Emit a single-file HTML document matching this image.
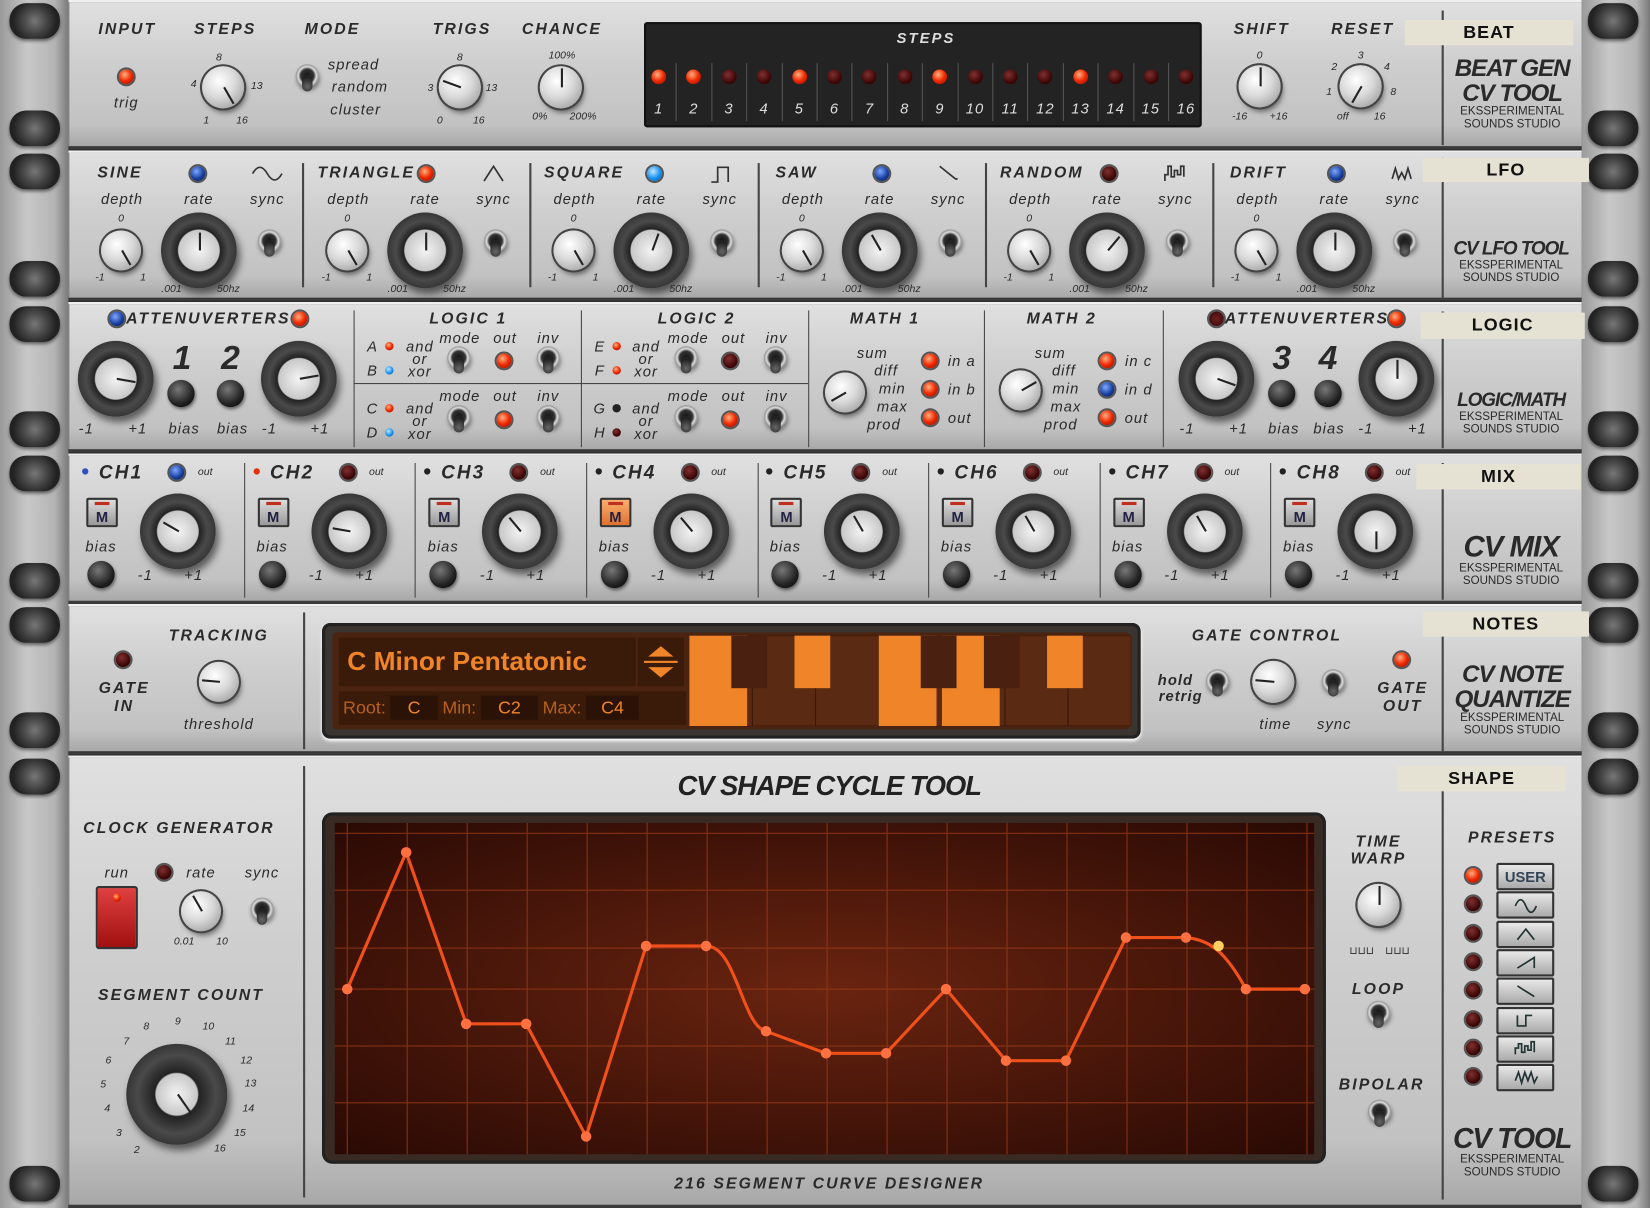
<!DOCTYPE html>
<html><head><meta charset="utf-8">
<style>
*{margin:0;padding:0;box-sizing:border-box}
html,body{width:1650px;height:1208px;overflow:hidden;background:#2a2a2a}
#w{position:absolute;left:0;top:0;width:1568px;height:1148px;transform:scale(1.05230,1.05226);transform-origin:0 0;font-family:"Liberation Sans",sans-serif}
.a{position:absolute}
.rail{position:absolute;top:0;height:1148px;width:65px;background:linear-gradient(90deg,#9a9a9a,#c8c8c8 40%,#b4b4b4 80%,#7a7a7a)}
.p{position:absolute;left:65px;width:1438px;background:linear-gradient(180deg,#e0e0e0,#cfcfcf 40%,#c2c2c2 85%,#a8a8a8);border-top:2px solid #f0f0f0;border-bottom:3px solid #3a3a3a;box-shadow:inset 1px 0 0 #888}
.l,.s{position:absolute;transform:translate(-50%,-50%);white-space:nowrap;color:#2a2a2a;font-style:italic}
.l{font-weight:bold;font-size:15px;letter-spacing:2px}
.s{font-size:14px;letter-spacing:1px}
.x{font-size:10px;letter-spacing:0}
.k,.kb,.kk,.led,.tg,.sc{position:absolute;transform:translate(-50%,-50%);border-radius:50%}
.k{background:radial-gradient(circle at 40% 35%,#fff,#d8d8d8 45%,#9a9a9a 90%);box-shadow:0 0 0 2px #444,2px 4px 5px rgba(0,0,0,.5)}
.kb{background:radial-gradient(circle at 50% 50%,#f4f4f4 0,#c8c8c8 38%,#222 40%,#4a4a4a 55%,#111 100%);box-shadow:3px 5px 7px rgba(0,0,0,.55)}
.kk{background:radial-gradient(circle at 40% 35%,#777,#222 60%,#000);box-shadow:1px 2px 3px rgba(0,0,0,.5)}
.led{width:14px;height:14px;box-shadow:0 0 0 2px #555}
.r{background:radial-gradient(circle at 40% 35%,#ffb080,#f02800 50%,#801000)}
.rd{background:radial-gradient(circle at 40% 35%,#803030,#400808 60%,#200000)}
.b{background:radial-gradient(circle at 40% 35%,#80a8ff,#1840a0 55%,#081040)}
.bb{background:radial-gradient(circle at 40% 35%,#c0e8ff,#1890f0 55%,#0850a0)}
.tg{width:22px;height:22px;background:radial-gradient(circle,#111 0,#333 40%,#ddd 55%,#777 75%,#333 100%);box-shadow:1px 3px 4px rgba(0,0,0,.4)}
.tg:after{content:"";position:absolute;left:6px;top:10px;width:10px;height:16px;border-radius:5px;background:radial-gradient(circle at 50% 70%,#666,#222 70%)}
.sc{width:48px;height:34px;border-radius:16px;background:radial-gradient(circle,#777 0,#444 40%,#222 70%);box-shadow:0 2px 3px rgba(0,0,0,.5)}
.tape{position:absolute;background:#e6e2d3;font:bold 17px "Liberation Sans",sans-serif;color:#111;text-align:center;letter-spacing:1px;line-height:24px}
.brand{position:absolute;transform:translateX(-50%);text-align:center;color:#2a2a2a;white-space:nowrap}
.brand b{display:block;font:italic bold 23px "Liberation Sans",sans-serif;letter-spacing:-1px;line-height:24px}
.brand i{display:block;font:normal 11px "Liberation Sans",sans-serif;line-height:12px}
.dv{position:absolute;width:2px;background:#444}
.ptr{position:absolute;left:50%;top:50%;width:2px;background:#222;transform-origin:50% 0}
.mb{position:absolute;width:30px;height:28px;background:linear-gradient(#ddd,#999);border:2px solid #333;border-radius:2px;text-align:center;font:bold 14px "Liberation Sans";color:#224;line-height:14px;padding-top:9px}
.mb:before{content:"";position:absolute;left:6px;top:2px;width:14px;height:3px;background:#c03020}
</style></head><body><div id="w">
<div class="rail" style="left:0"></div><div class="rail" style="left:1503px"></div>

<div class="p" style="top:0;height:142px"></div>
<div class="p" style="top:143px;height:143px"></div>
<div class="p" style="top:287px;height:143px"></div>
<div class="p" style="top:431px;height:143px"></div>
<div class="p" style="top:574px;height:143px"></div>
<div class="p" style="top:718px;height:430px"></div>

<div class="dv" style="left:1370px;top:10px;height:128px"></div>
<div class="dv" style="left:1370px;top:150px;height:133px"></div>
<div class="dv" style="left:1370px;top:296px;height:130px"></div>
<div class="dv" style="left:1370px;top:440px;height:130px"></div>
<div class="dv" style="left:1370px;top:590px;height:124px"></div>
<div class="dv" style="left:1370px;top:740px;height:400px"></div>
<div class="dv" style="left:287px;top:155px;height:118px"></div><div class="dv" style="left:503px;top:155px;height:118px"></div><div class="dv" style="left:720px;top:155px;height:118px"></div><div class="dv" style="left:936px;top:155px;height:118px"></div><div class="dv" style="left:1152px;top:155px;height:118px"></div>
<div class="dv" style="left:336px;top:295px;height:130px;width:1px"></div><div class="dv" style="left:552px;top:295px;height:130px;width:1px"></div><div class="dv" style="left:768px;top:295px;height:130px;width:1px"></div><div class="dv" style="left:935px;top:295px;height:130px;width:1px"></div><div class="dv" style="left:1105px;top:295px;height:130px;width:1px"></div>
<div class="dv" style="left:336px;top:364px;width:432px;height:1px"></div>
<div class="dv" style="left:232px;top:440px;height:128px;width:1px"></div><div class="dv" style="left:394px;top:440px;height:128px;width:1px"></div><div class="dv" style="left:557px;top:440px;height:128px;width:1px"></div><div class="dv" style="left:720px;top:440px;height:128px;width:1px"></div><div class="dv" style="left:882px;top:440px;height:128px;width:1px"></div><div class="dv" style="left:1045px;top:440px;height:128px;width:1px"></div><div class="dv" style="left:1207px;top:440px;height:128px;width:1px"></div>
<div class="dv" style="left:288px;top:582px;height:130px"></div><div class="dv" style="left:288px;top:728px;height:410px"></div>

<div id="screws"></div>

<!-- ROW1 -->
<div class="l" style="left:121px;top:28px">INPUT</div>
<div class="led r" style="left:120px;top:73px"></div><div class="s" style="left:120px;top:97px">trig</div>
<div class="l" style="left:214px;top:28px">STEPS</div>
<div class="k" style="left:212px;top:83px;width:40px;height:40px"><div class="ptr" style="height:18px;transform:rotate(-30deg)"></div></div>
<div class="s x" style="left:208px;top:55px">8</div><div class="s x" style="left:184px;top:80px">4</div><div class="s x" style="left:244px;top:82px">13</div><div class="s x" style="left:196px;top:115px">1</div><div class="s x" style="left:230px;top:115px">16</div>
<div class="l" style="left:316px;top:28px">MODE</div>
<div class="tg" style="left:292px;top:72px"></div>
<div class="s" style="left:336px;top:61px">spread</div><div class="s" style="left:342px;top:82px">random</div><div class="s" style="left:338px;top:104px">cluster</div>
<div class="l" style="left:439px;top:28px">TRIGS</div>
<div class="k" style="left:437px;top:83px;width:40px;height:40px"><div class="ptr" style="height:18px;transform:rotate(110deg)"></div></div>
<div class="s x" style="left:437px;top:55px">8</div><div class="s x" style="left:409px;top:84px">3</div><div class="s x" style="left:467px;top:84px">13</div><div class="s x" style="left:418px;top:115px">0</div><div class="s x" style="left:455px;top:115px">16</div>
<div class="l" style="left:534px;top:28px">CHANCE</div>
<div class="k" style="left:533px;top:83px;width:40px;height:40px"><div class="ptr" style="height:18px;transform:rotate(180deg)"></div></div>
<div class="s x" style="left:534px;top:53px">100%</div><div class="s x" style="left:513px;top:111px">0%</div><div class="s x" style="left:554px;top:111px">200%</div>
<div class="a" style="left:612px;top:21px;width:530px;height:100px;background:#232323;border-radius:3px;box-shadow:inset 0 0 0 2px #111"></div>
<div class="l" style="left:880px;top:36px;color:#ddd;font-size:14px">STEPS</div>
<div id="steps"></div>
<div class="l" style="left:1199px;top:28px">SHIFT</div>
<div class="k" style="left:1197px;top:82px;width:40px;height:40px"><div class="ptr" style="height:18px;transform:rotate(180deg)"></div></div>
<div class="s x" style="left:1197px;top:53px">0</div><div class="s x" style="left:1178px;top:111px">-16</div><div class="s x" style="left:1215px;top:111px">+16</div>
<div class="l" style="left:1295px;top:28px">RESET</div>
<div class="k" style="left:1293px;top:82px;width:40px;height:40px"><div class="ptr" style="height:18px;transform:rotate(30deg)"></div></div>
<div class="s x" style="left:1293px;top:53px">3</div><div class="s x" style="left:1268px;top:64px">2</div><div class="s x" style="left:1318px;top:64px">4</div><div class="s x" style="left:1263px;top:88px">1</div><div class="s x" style="left:1324px;top:88px">8</div><div class="s x" style="left:1276px;top:111px">off</div><div class="s x" style="left:1311px;top:111px">16</div>
<div class="tape" style="left:1335px;top:19px;width:160px;height:24px">BEAT</div>
<div class="brand" style="left:1437px;top:52px"><b>BEAT GEN</b><b>CV TOOL</b><i>EKSSPERIMENTAL</i><i>SOUNDS STUDIO</i></div>

<!-- ROW2 -->
<div class="l" style="left:114px;top:164px">SINE</div><div class="led b" style="left:188px;top:165px"></div>
<div class="l" style="left:348px;top:164px">TRIANGLE</div><div class="led r" style="left:405px;top:165px"></div>
<div class="l" style="left:555px;top:164px">SQUARE</div><div class="led bb" style="left:622px;top:165px"></div>
<div class="l" style="left:757px;top:164px">SAW</div><div class="led b" style="left:838px;top:165px"></div>
<div class="l" style="left:990px;top:164px">RANDOM</div><div class="led rd" style="left:1054px;top:165px"></div>
<div class="l" style="left:1196px;top:164px">DRIFT</div><div class="led b" style="left:1270px;top:165px"></div>
<svg class="a" style="left:0;top:0" width="1568" height="300" fill="none" stroke="#333" stroke-width="1.6">
<path d="M240 165 q7 -12 14 0 t14 0"/><path d="M460 172 l9 -14 l9 14"/><path d="M676 173 h6 v-14 h10 v14"/><path d="M893 158 l15 12 h2"/><path d="M1107 172 v-6 h3 v-8 h3 v10 h3 v-6 h3 v4 h3 v-8 h3 v10"/><path d="M1323 170 l3 -10 l3 10 l3 -6 l3 6 l3 -10 l3 10"/>
</svg>
<div id="lfo"></div>
<div class="tape" style="left:1352px;top:150px;width:158px;height:23px">LFO</div>
<div class="brand" style="left:1436px;top:226px"><b style="font-size:18px;line-height:20px">CV LFO TOOL</b><i>EKSSPERIMENTAL</i><i>SOUNDS STUDIO</i></div>

<!-- ROW3 -->
<div class="led b" style="left:111px;top:303px"></div><div class="l" style="left:198px;top:303px">ATTENUVERTERS</div><div class="led r" style="left:285px;top:303px"></div>
<div class="kb" style="left:110px;top:360px;width:72px;height:72px"><div class="ptr" style="height:18px;transform:rotate(-80deg)"></div></div>
<div class="kb" style="left:284px;top:360px;width:72px;height:72px"><div class="ptr" style="height:18px;transform:rotate(-100deg)"></div></div>
<div class="l" style="left:174px;top:340px;font-size:32px">1</div><div class="l" style="left:220px;top:340px;font-size:32px">2</div>
<div class="kk" style="left:172px;top:374px;width:26px;height:26px"></div><div class="kk" style="left:219px;top:374px;width:26px;height:26px"></div>
<div class="s" style="left:82px;top:407px">-1</div><div class="s" style="left:131px;top:407px">+1</div><div class="s" style="left:175px;top:407px">bias</div><div class="s" style="left:221px;top:407px">bias</div><div class="s" style="left:256px;top:407px">-1</div><div class="s" style="left:304px;top:407px">+1</div>
<div class="led b" style="left:1156px;top:303px;background:radial-gradient(circle,#702020,#300808)"></div><div class="l" style="left:1242px;top:303px">ATTENUVERTERS</div><div class="led r" style="left:1327px;top:303px"></div>
<div class="kb" style="left:1156px;top:360px;width:72px;height:72px"><div class="ptr" style="height:18px;transform:rotate(-70deg)"></div></div>
<div class="kb" style="left:1327px;top:360px;width:72px;height:72px"><div class="ptr" style="height:18px;transform:rotate(180deg)"></div></div>
<div class="l" style="left:1219px;top:340px;font-size:32px">3</div><div class="l" style="left:1263px;top:340px;font-size:32px">4</div>
<div class="kk" style="left:1218px;top:374px;width:26px;height:26px"></div><div class="kk" style="left:1262px;top:374px;width:26px;height:26px"></div>
<div class="s" style="left:1128px;top:407px">-1</div><div class="s" style="left:1177px;top:407px">+1</div><div class="s" style="left:1220px;top:407px">bias</div><div class="s" style="left:1263px;top:407px">bias</div><div class="s" style="left:1298px;top:407px">-1</div><div class="s" style="left:1347px;top:407px">+1</div>
<div id="logic"></div>
<div class="l" style="left:445px;top:303px">LOGIC 1</div><div class="l" style="left:662px;top:303px">LOGIC 2</div>
<div class="l" style="left:841px;top:303px">MATH 1</div><div class="l" style="left:1009px;top:303px">MATH 2</div>
<div class="tape" style="left:1350px;top:297px;width:156px;height:25px">LOGIC</div>
<div class="brand" style="left:1436px;top:370px"><b style="font-size:18px;line-height:20px">LOGIC/MATH</b><i>EKSSPERIMENTAL</i><i>SOUNDS STUDIO</i></div>

<!-- ROW4 -->
<div id="mix"></div>
<div class="tape" style="left:1346px;top:441px;width:156px;height:24px">MIX</div>
<div class="brand" style="left:1436px;top:506px"><b style="font-size:28px;line-height:28px">CV MIX</b><i>EKSSPERIMENTAL</i><i>SOUNDS STUDIO</i></div>

<!-- ROW5 -->
<div class="led rd" style="left:117px;top:627px"></div><div class="l" style="left:118px;top:654px">GATE</div><div class="l" style="left:118px;top:671px">IN</div>
<div class="l" style="left:208px;top:604px">TRACKING</div>
<div class="k" style="left:208px;top:648px;width:38px;height:38px"><div class="ptr" style="height:17px;transform:rotate(95deg)"></div></div>
<div class="s" style="left:208px;top:688px">threshold</div>
<div class="a" style="left:306px;top:592px;width:778px;height:110px;background:#3a3530;border-radius:8px;box-shadow:inset 0 0 0 3px #222,0 2px 3px #fff"></div>
<div class="a" style="left:316px;top:601px;width:758px;height:92px;background:#4a2410;border-radius:4px"></div>
<div class="a" style="left:322px;top:606px;width:282px;height:46px;background:#3a1a08"></div>
<div class="a" style="left:330px;top:629px;transform:translateY(-50%);font:bold 25px 'Liberation Sans';color:#f08428;white-space:nowrap">C Minor Pentatonic</div>
<div class="a" style="left:606px;top:606px;width:44px;height:46px;background:#3a1a08"></div>
<svg class="a" style="left:606px;top:606px" width="44" height="46"><path d="M10 18 L22 8 L34 18Z M10 28 L22 38 L34 28Z" fill="#f08428"/><rect x="6" y="22" width="32" height="2" fill="#f08428"/></svg>
<div class="a" style="left:322px;top:657px;width:330px;height:32px;background:#3a1a08"></div>
<div class="a" style="left:326px;top:673px;transform:translateY(-50%);font:17px 'Liberation Sans';color:#b86020;white-space:nowrap">Root: <span style="background:#2a1206;padding:2px 16px;color:#f08428">C</span> Min: <span style="background:#2a1206;padding:2px 16px;color:#f08428">C2</span> Max: <span style="background:#2a1206;padding:2px 14px;color:#f08428">C4</span></div>
<svg class="a" style="left:655px;top:604px" width="420" height="86">
<g fill="#5a2a12" stroke="#3a1808"><rect x="0" y="0" width="60" height="86"/><rect x="60" y="0" width="60" height="86"/><rect x="120" y="0" width="60" height="86"/><rect x="180" y="0" width="60" height="86"/><rect x="240" y="0" width="60" height="86"/><rect x="300" y="0" width="60" height="86"/><rect x="360" y="0" width="60" height="86"/></g>
<g fill="#f08428"><rect x="0" y="0" width="55" height="86"/><rect x="180" y="0" width="55" height="86"/><rect x="240" y="0" width="55" height="86"/></g>
<g fill="#4a2010"><rect x="40" y="0" width="34" height="50"/><rect x="100" y="0" width="34" height="50"/><rect x="220" y="0" width="34" height="50"/><rect x="280" y="0" width="34" height="50"/><rect x="340" y="0" width="34" height="50"/></g>
<g fill="#f08428"><rect x="100" y="0" width="34" height="50"/><rect x="340" y="0" width="34" height="50"/></g>
</svg>
<div class="l" style="left:1204px;top:604px">GATE CONTROL</div>
<div class="s" style="left:1117px;top:646px;font-weight:bold">hold</div><div class="s" style="left:1122px;top:661px;font-weight:bold">retrig</div>
<div class="tg" style="left:1157px;top:647px"></div>
<div class="k" style="left:1210px;top:648px;width:40px;height:40px"><div class="ptr" style="height:18px;transform:rotate(95deg)"></div></div>
<div class="s" style="left:1212px;top:688px">time</div>
<div class="tg" style="left:1267px;top:647px"></div><div class="s" style="left:1268px;top:688px">sync</div>
<div class="led r" style="left:1332px;top:627px"></div><div class="l" style="left:1333px;top:654px">GATE</div><div class="l" style="left:1333px;top:671px">OUT</div>
<div class="tape" style="left:1352px;top:581px;width:158px;height:24px">NOTES</div>
<div class="brand" style="left:1437px;top:628px"><b>CV NOTE</b><b>QUANTIZE</b><i>EKSSPERIMENTAL</i><i>SOUNDS STUDIO</i></div>

<!-- ROW6 -->
<div class="l" style="left:788px;top:747px;font-size:26px;letter-spacing:-1px;color:#222">CV SHAPE CYCLE TOOL</div>
<div class="l" style="left:170px;top:787px">CLOCK GENERATOR</div>
<div class="s" style="left:111px;top:829px">run</div><div class="led rd" style="left:156px;top:829px"></div><div class="s" style="left:191px;top:829px">rate</div><div class="s" style="left:249px;top:829px">sync</div>
<div class="a" style="left:91px;top:842px;width:40px;height:60px;background:linear-gradient(#e04040,#a01010);border:2px solid #333;border-radius:3px"></div>
<div class="led r" style="left:111px;top:853px;width:8px;height:8px;box-shadow:none"></div>
<div class="k" style="left:191px;top:866px;width:38px;height:38px"><div class="ptr" style="height:17px;transform:rotate(150deg)"></div></div>
<div class="s x" style="left:175px;top:895px">0.01</div><div class="s x" style="left:211px;top:895px">10</div>
<div class="tg" style="left:249px;top:864px"></div>
<div class="l" style="left:172px;top:946px">SEGMENT COUNT</div>
<div class="kb" style="left:168px;top:1040px;width:96px;height:96px;background:radial-gradient(circle,#f4f4f4 0,#c8c8c8 29%,#222 31%,#4a4a4a 55%,#111 100%)"><div class="ptr" style="height:22px;transform:rotate(-35deg)"></div></div>
<div class="s x" style="left:139px;top:976px">8</div><div class="s x" style="left:169px;top:971px">9</div><div class="s x" style="left:198px;top:976px">10</div><div class="s x" style="left:219px;top:990px">11</div><div class="s x" style="left:234px;top:1008px">12</div><div class="s x" style="left:238px;top:1030px">13</div><div class="s x" style="left:236px;top:1054px">14</div><div class="s x" style="left:228px;top:1077px">15</div><div class="s x" style="left:209px;top:1092px">16</div><div class="s x" style="left:120px;top:990px">7</div><div class="s x" style="left:103px;top:1008px">6</div><div class="s x" style="left:98px;top:1031px">5</div><div class="s x" style="left:102px;top:1054px">4</div><div class="s x" style="left:113px;top:1077px">3</div><div class="s x" style="left:130px;top:1093px">2</div>
<div class="a" style="left:306px;top:772px;width:954px;height:334px;background:#3a2a24;border-radius:10px;box-shadow:inset 0 0 0 3px #222"></div>
<svg class="a" style="left:318px;top:782px" width="931" height="315">
<defs><radialGradient id="g" cx="50%" cy="50%" r="70%"><stop offset="0" stop-color="#6a2410"/><stop offset="1" stop-color="#2a0a04"/></radialGradient></defs>
<rect width="931" height="315" fill="url(#g)"/>
<g stroke="#9a3a18" stroke-width="1.2" opacity=".7">
<path d="M12 0v315M69 0v315M126 0v315M183 0v315M240 0v315M297 0v315M354 0v315M411 0v315M468 0v315M525 0v315M582 0v315M639 0v315M696 0v315M753 0v315M810 0v315M867 0v315M924 0v315"/>
<path d="M0 10h931M0 64h931M0 119h931M0 158h931M0 212h931M0 266h931"/>
</g>
<g transform="translate(-318,-782)" fill="none" stroke="#f0501a" stroke-width="3">
<path d="M330 940 L386 810 L443 973 L500 973 L557 1080 L614 899 L671 899 C700 899 705 975 728 980 L785 1001 L842 1001 L899 940 L956 1008 L1013 1008 L1070 891 L1127 891 C1150 893 1165 905 1184 940 L1240 940"/>
<g fill="#ff7040" stroke="none"><circle cx="330" cy="940" r="5"/><circle cx="386" cy="810" r="5"/><circle cx="443" cy="973" r="5"/><circle cx="500" cy="973" r="5"/><circle cx="557" cy="1080" r="5"/><circle cx="614" cy="899" r="5"/><circle cx="671" cy="899" r="5"/><circle cx="728" cy="980" r="5"/><circle cx="785" cy="1001" r="5"/><circle cx="842" cy="1001" r="5"/><circle cx="899" cy="940" r="5"/><circle cx="956" cy="1008" r="5"/><circle cx="1013" cy="1008" r="5"/><circle cx="1070" cy="891" r="5"/><circle cx="1127" cy="891" r="5"/><circle cx="1158" cy="899" r="5" fill="#ffd060"/><circle cx="1184" cy="940" r="5"/><circle cx="1240" cy="940" r="5"/></g>
</g></svg>
<div class="l" style="left:788px;top:1125px;font-size:15px">216 SEGMENT CURVE DESIGNER</div>
<div class="l" style="left:1310px;top:800px">TIME</div><div class="l" style="left:1310px;top:816px">WARP</div>
<div class="k" style="left:1310px;top:860px;width:40px;height:40px"><div class="ptr" style="height:18px;transform:rotate(180deg)"></div></div>
<div class="s x" style="left:1294px;top:904px;font-style:normal">⊔⊔⊔</div><div class="s x" style="left:1328px;top:904px;font-style:normal">⊔⊔⊔</div>
<div class="l" style="left:1310px;top:940px">LOOP</div><div class="tg" style="left:1310px;top:962px"></div>
<div class="l" style="left:1313px;top:1031px">BIPOLAR</div><div class="tg" style="left:1311px;top:1056px"></div>
<div class="l" style="left:1437px;top:796px">PRESETS</div>
<div id="pre"></div>
<div class="tape" style="left:1328px;top:728px;width:160px;height:24px">SHAPE</div>
<div class="brand" style="left:1437px;top:1068px"><b style="font-size:27px;line-height:28px">CV TOOL</b><i>EKSSPERIMENTAL</i><i>SOUNDS STUDIO</i></div>

<div class="s" style="left:354px;top:329px">A</div><div class="s" style="left:354px;top:352px">B</div><div class="s" style="left:354px;top:388px">C</div><div class="s" style="left:354px;top:411px">D</div>
<div class="s" style="left:570px;top:329px">E</div><div class="s" style="left:570px;top:352px">F</div><div class="s" style="left:570px;top:388px">G</div><div class="s" style="left:570px;top:411px">H</div>
<div class="s" style="left:399px;top:329px">and</div><div class="s" style="left:399px;top:341px">or</div><div class="s" style="left:399px;top:353px">xor</div>
<div class="s" style="left:399px;top:388px">and</div><div class="s" style="left:399px;top:400px">or</div><div class="s" style="left:399px;top:412px">xor</div>
<div class="s" style="left:614px;top:329px">and</div><div class="s" style="left:614px;top:341px">or</div><div class="s" style="left:614px;top:353px">xor</div>
<div class="s" style="left:614px;top:388px">and</div><div class="s" style="left:614px;top:400px">or</div><div class="s" style="left:614px;top:412px">xor</div>
<div class="s" style="left:437px;top:321px">mode</div><div class="s" style="left:480px;top:321px">out</div><div class="s" style="left:521px;top:321px">inv</div>
<div class="s" style="left:437px;top:376px">mode</div><div class="s" style="left:480px;top:376px">out</div><div class="s" style="left:521px;top:376px">inv</div>
<div class="s" style="left:654px;top:321px">mode</div><div class="s" style="left:697px;top:321px">out</div><div class="s" style="left:738px;top:321px">inv</div>
<div class="s" style="left:654px;top:376px">mode</div><div class="s" style="left:697px;top:376px">out</div><div class="s" style="left:738px;top:376px">inv</div>
<div class="s" style="left:829px;top:335px">sum</div><div class="s" style="left:842px;top:352px">diff</div><div class="s" style="left:848px;top:369px">min</div><div class="s" style="left:848px;top:386px">max</div><div class="s" style="left:840px;top:403px">prod</div>
<div class="s" style="left:998px;top:335px">sum</div><div class="s" style="left:1011px;top:352px">diff</div><div class="s" style="left:1013px;top:369px">min</div><div class="s" style="left:1013px;top:386px">max</div><div class="s" style="left:1008px;top:403px">prod</div>
<div class="s" style="left:914px;top:343px">in a</div><div class="s" style="left:914px;top:370px">in b</div><div class="s" style="left:912px;top:397px">out</div>
<div class="s" style="left:1082px;top:343px">in c</div><div class="s" style="left:1082px;top:370px">in d</div><div class="s" style="left:1080px;top:397px">out</div>
</div>
<script>
function h(id,s){document.getElementById(id).innerHTML+=s}
var s='';for(var i=0;i<16;i++){var x=626+33.4*i;var on=[0,1,4,8,12].indexOf(i)>=0;
s+='<div class="led '+(on?'r':'rd')+'" style="left:'+x+'px;top:73px;box-shadow:none"></div><div class="s" style="left:'+x+'px;top:103px;color:#ddd;font-size:14px">'+(i+1)+'</div>';
if(i>0)s+='<div class="a" style="left:'+(x-17)+'px;top:60px;width:1px;height:55px;background:#555"></div>';}
h('steps',s);
var xs=[90,305,520,737,953,1169],rot=[180,180,200,150,220,180];s='';
xs.forEach(function(b,i){s+='<div class="s" style="left:'+(b+26)+'px;top:189px">depth</div><div class="s" style="left:'+(b+99)+'px;top:189px">rate</div><div class="s" style="left:'+(b+164)+'px;top:189px">sync</div>'+
'<div class="s x" style="left:'+(b+25)+'px;top:208px">0</div>'+
'<div class="k" style="left:'+(b+25)+'px;top:238px;width:38px;height:38px"><div class="ptr" style="height:16px;transform:rotate(-30deg)"></div></div>'+
'<div class="kb" style="left:'+(b+99)+'px;top:238px;width:72px;height:72px"><div class="ptr" style="height:17px;transform:rotate('+rot[i]+'deg)"></div></div>'+
'<div class="tg" style="left:'+(b+166)+'px;top:229px"></div>'+
'<div class="s x" style="left:'+(b+5)+'px;top:264px">-1</div><div class="s x" style="left:'+(b+46)+'px;top:264px">1</div><div class="s x" style="left:'+(b+73)+'px;top:275px">.001</div><div class="s x" style="left:'+(b+127)+'px;top:275px">50hz</div>';});
h('lfo',s);
s='';
[[370,329,'r'],[370,352,'bb'],[370,388,'r'],[370,411,'bb'],[586,329,'r'],[586,352,'r'],[586,388,'kk2'],[586,411,'rd']].forEach(function(a){s+='<div class="led '+a[2]+'" style="left:'+a[0]+'px;top:'+a[1]+'px;width:8px;height:8px;box-shadow:none;'+(a[2]=='kk2'?'background:#222':'')+'"></div>'});
[[436,340],[521,340],[436,396],[521,396],[652,340],[737,340],[652,396],[737,396]].forEach(function(a){s+='<div class="tg" style="left:'+a[0]+'px;top:'+a[1]+'px"></div>'});
[[479,343,'r'],[479,399,'r'],[694,343,'rd'],[694,399,'r'],[884,343,'r'],[884,370,'r'],[884,397,'r'],[1052,343,'r'],[1052,370,'b'],[1052,397,'r']].forEach(function(a){s+='<div class="led '+a[2]+'" style="left:'+a[0]+'px;top:'+a[1]+'px"></div>'});
s+='<div class="k" style="left:803px;top:373px;width:38px;height:38px"><div class="ptr" style="height:16px;transform:rotate(60deg)"></div></div>';
s+='<div class="k" style="left:970px;top:371px;width:38px;height:38px"><div class="ptr" style="height:16px;transform:rotate(-120deg)"></div></div>';
h('logic',s);
s='';var mr=[-60,-80,-40,-40,-30,-30,-30,180];
for(var i=0;i<8;i++){var b=70+162.6*i;
s+='<div class="led" style="left:'+(b+11)+'px;top:448px;width:6px;height:6px;box-shadow:none;background:'+(i==0?'#3050c0':i==1?'#e03010':'#222')+'"></div>';
s+='<div class="l" style="left:'+(b+45)+'px;top:449px;font-size:18px">CH'+(i+1)+'</div>';
s+='<div class="led '+(i==0?'b':'rd')+'" style="left:'+(b+98)+'px;top:449px"></div><div class="s x" style="left:'+(b+125)+'px;top:449px">out</div>';
s+='<div class="mb" style="left:'+(b+12)+'px;top:473px;'+(i==3?'background:linear-gradient(#f8b070,#e07030)':'')+'">M</div>';
s+='<div class="s" style="left:'+(b+26)+'px;top:519px">bias</div><div class="kk" style="left:'+(b+26)+'px;top:546px;width:26px;height:26px"></div>';
s+='<div class="kb" style="left:'+(b+99)+'px;top:505px;width:72px;height:72px"><div class="ptr" style="height:17px;transform:rotate('+(180+mr[i])+'deg)"></div></div>';
s+='<div class="s" style="left:'+(b+68)+'px;top:546px">-1</div><div class="s" style="left:'+(b+114)+'px;top:546px">+1</div>';}
h('mix',s);
s='';var ic=['','M4 12 q5 -12 10 0 t10 0','M6 16 l8 -10 l8 10','M6 16 l16 -10 v10','M6 6 l16 10','M6 6 v10 h8 v-10 h6','M4 16 v-6 h3 v-4 h3 v8 h3 v-6 h3 v4 h3 v-8 h3 v10','M4 14 l3 -8 l3 10 l3 -10 l3 8 l3 -8 l3 10 l3 -6'];
for(var i=0;i<8;i++){var y=832+27.3*i;
s+='<div class="led '+(i==0?'r':'rd')+'" style="left:1400px;top:'+y+'px"></div>';
s+='<div class="a" style="left:1422px;top:'+(y-12)+'px;width:55px;height:26px;background:linear-gradient(#e8e8e8,#aaa);border:2px solid #333;border-radius:2px;text-align:center;font:bold 14px Liberation Sans;color:#345;line-height:22px">'+(i==0?'USER':'<svg width="28" height="22" fill="none" stroke="#233" stroke-width="1.6"><path d="'+ic[i]+'"/></svg>')+'</div>';}
h('pre',s);
s='';[[20,122],[163,265],[308,408],[450,552],[594,694],[738,1125]].forEach(function(r){r.forEach(function(y){s+='<div class="sc" style="left:33px;top:'+y+'px"></div><div class="sc" style="left:1533px;top:'+y+'px"></div>';});});
h('screws',s);
</script>
</body></html>
